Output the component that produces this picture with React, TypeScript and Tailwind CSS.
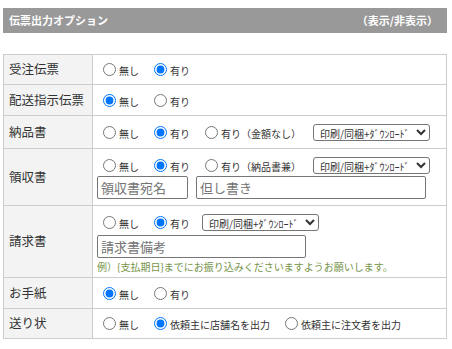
const FONT = "font-['Noto_Sans_CJK_JP','Noto_Sans',sans-serif]"

interface Opt {
  label: string
  checked?: boolean
}

function Radios({ name, opts }: { name: string; opts: Opt[] }) {
  return (
    <>
      {opts.map((o) => (
        <label key={o.label} className="flex items-center gap-[3px] whitespace-nowrap">
          <input type="radio" name={name} defaultChecked={o.checked} className="m-0 size-[13px] shrink-0" />
          <span className="text-[10px] leading-none pt-[3px] text-[#333]">{o.label}</span>
        </label>
      ))}
    </>
  )
}

function OutSelect() {
  return (
    <select className="ml-[-3px] h-[17px] w-[117px] border border-[#767676] rounded-[3px] bg-white pl-[2px] text-[10px] leading-none text-[#333]">
      <option>印刷/同梱+ﾀﾞｳﾝﾛｰﾄﾞ</option>
      <option>印刷のみ</option>
      <option>ﾀﾞｳﾝﾛｰﾄﾞのみ</option>
    </select>
  )
}

function Row({ label, h, children }: { label: string; h: string; children: React.ReactNode }) {
  return (
    <>
      <div className={`${h} flex items-center border-r border-b border-[#ccc] bg-[#f2f3f2] pl-[5px] text-[12.5px] text-[#333]`}>
        {label}
      </div>
      <div className={`${h} border-r border-b border-[#ccc] bg-white`}>{children}</div>
    </>
  )
}

const no = (c = false): Opt => ({ label: '無し', checked: c })
const yes = (c = false): Opt => ({ label: '有り', checked: c })

export default function App() {
  return (
    <div className={`${FONT} w-[452px] h-[349px] bg-white pt-[8px] pl-[3px]`}>
      <div className="flex h-[25px] w-[444px] items-center justify-between bg-[#999] pl-[6px] pr-[9px] text-[11px] font-bold text-white">
        <span>伝票出力オプション</span>
        <span>（表示/非表示）</span>
      </div>

      <div className="mt-[21px] grid w-[444px] grid-cols-[89px_354px] border-t border-l border-[#ccc]">
        <Row label="受注伝票" h="h-[30px]">
          <div className="flex h-full items-center gap-[15px] pl-[10px]">
            <Radios name="order" opts={[no(), yes(true)]} />
          </div>
        </Row>
        <Row label="配送指示伝票" h="h-[31px]">
          <div className="flex h-full items-center gap-[15px] pl-[10px]">
            <Radios name="ship" opts={[no(true), yes()]} />
          </div>
        </Row>
        <Row label="納品書" h="h-[33px]">
          <div className="flex h-full items-center gap-[15px] pl-[10px]">
            <Radios name="delivery" opts={[no(), yes(true), { label: '有り（金額なし）' }]} />
            <OutSelect />
          </div>
        </Row>
        <Row label="領収書" h="h-[57px]">
          <div className="flex flex-col pt-[8px]">
            <div className="flex h-[17px] items-center gap-[15px] pl-[10px]">
              <Radios name="receipt" opts={[no(), yes(true), { label: '有り（納品書兼）' }]} />
              <OutSelect />
            </div>
            <div className="mt-[2px] flex gap-[8px] pl-[4px]">
              <input placeholder="領収書宛名" className="h-[23px] w-[91px] rounded-[2px] border border-[#767676] px-[3px] text-[13px] placeholder:text-[#757575]" />
              <input placeholder="但し書き" className="h-[23px] w-[230px] rounded-[2px] border border-[#767676] px-[3px] text-[13px] placeholder:text-[#757575]" />
            </div>
          </div>
        </Row>
        <Row label="請求書" h="h-[72px]">
          <div className="flex flex-col pt-[8px]">
            <div className="flex h-[17px] items-center gap-[15px] pl-[10px]">
              <Radios name="invoice" opts={[no(), yes(true)]} />
              <OutSelect />
            </div>
            <div className="mt-[2px] pl-[4px]">
              <input placeholder="請求書備考" className="h-[23px] w-[209px] rounded-[2px] border border-[#767676] px-[3px] text-[13px] placeholder:text-[#757575]" />
            </div>
            <p className="mt-[2px] pl-[4px] text-[10px] leading-[14px] text-[#76944a]">
              例）{'{'}支払期日{'}'}までにお振り込みくださいますようお願いします。
            </p>
          </div>
        </Row>
        <Row label="お手紙" h="h-[31px]">
          <div className="flex h-full items-center gap-[15px] pl-[10px]">
            <Radios name="letter" opts={[no(true), yes()]} />
          </div>
        </Row>
        <Row label="送り状" h="h-[30px]">
          <div className="flex h-full items-center gap-[15px] pl-[10px]">
            <Radios
              name="slip"
              opts={[no(), { label: '依頼主に店舗名を出力', checked: true }, { label: '依頼主に注文者を出力' }]}
            />
          </div>
        </Row>
      </div>
    </div>
  )
}
